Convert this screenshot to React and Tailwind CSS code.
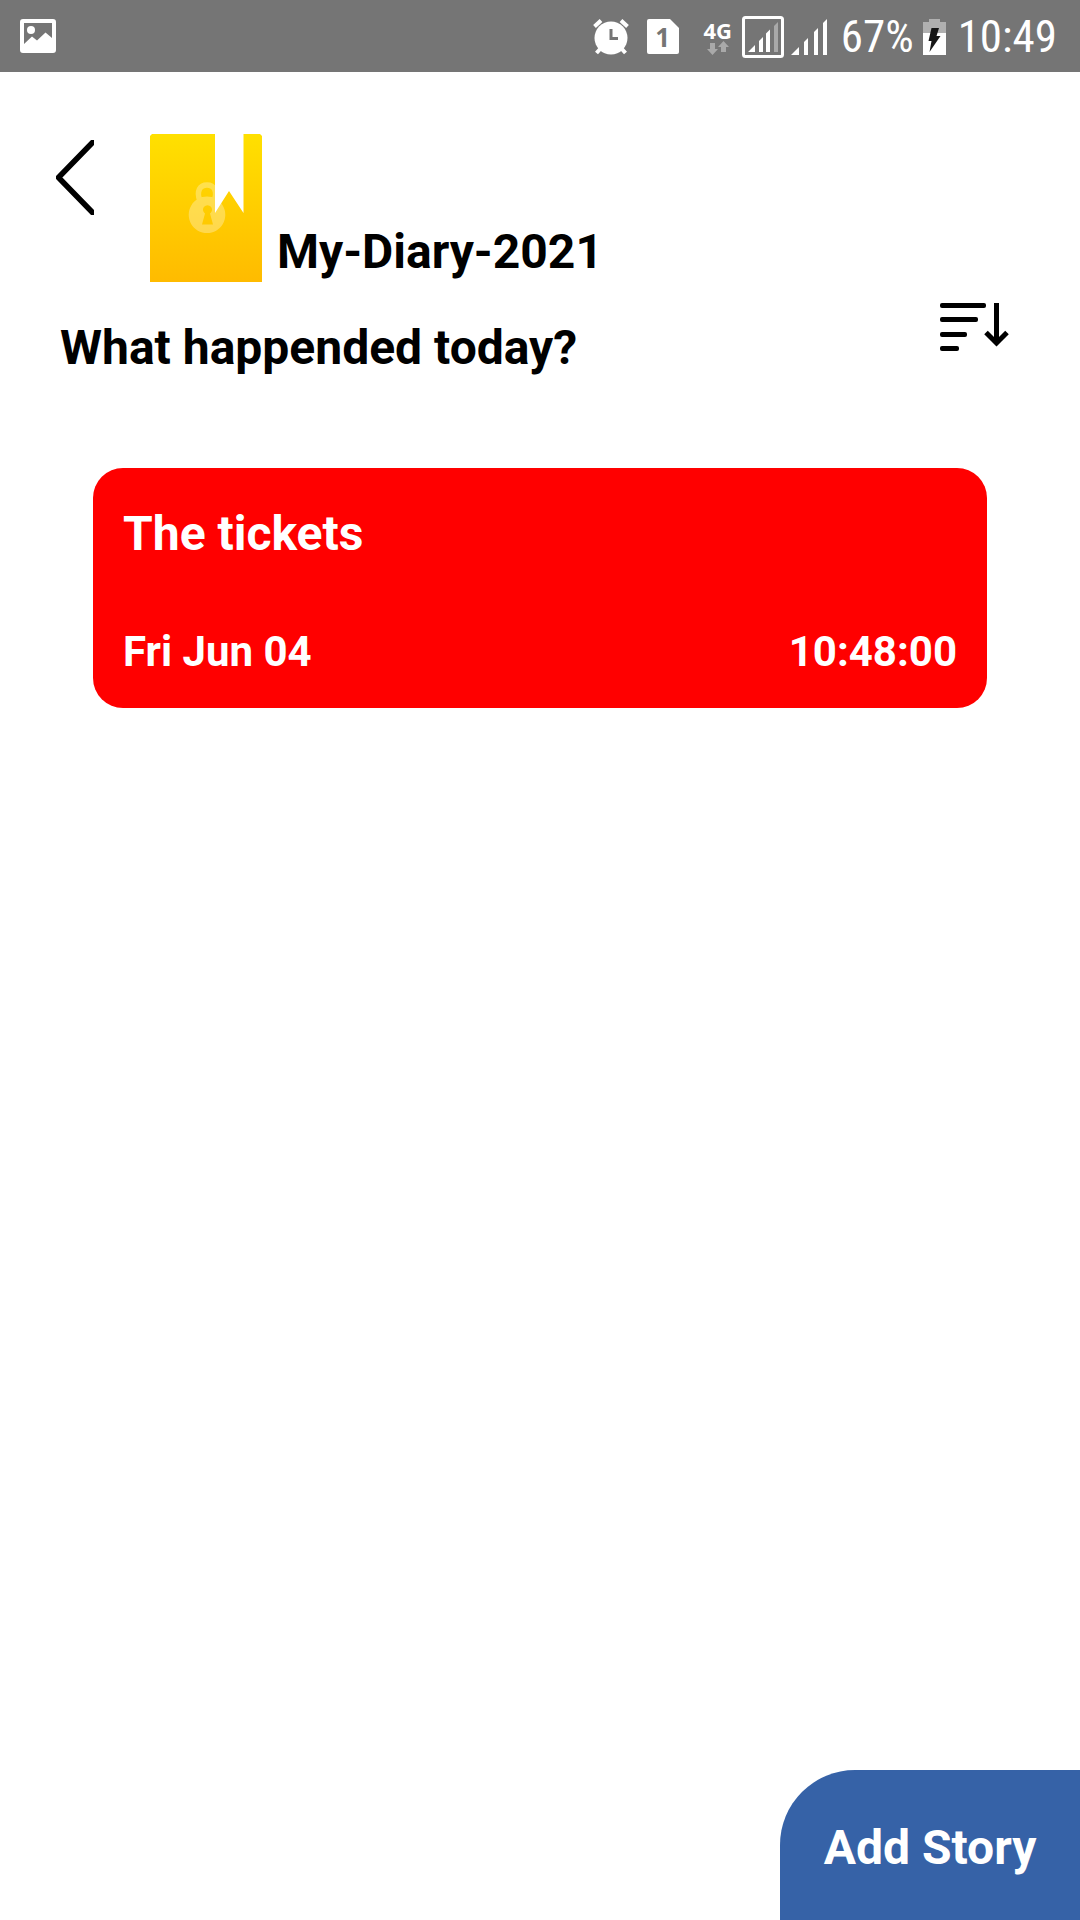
import React from "react";

function PictureIcon() {
  return (
    <svg width="36" height="34" viewBox="0 0 36 34" aria-hidden="true">
      <path
        fill="#fff"
        fillRule="evenodd"
        d="M3 0H33a3 3 0 0 1 3 3V31a3 3 0 0 1-3 3H3a3 3 0 0 1-3-3V3a3 3 0 0 1 3-3ZM4 4V25L12 17.500 17 21.500 25.500 13.500 32 19V4Z"
      />
      <circle cx="11" cy="11" r="4" fill="#fff" />
    </svg>
  );
}

function AlarmIcon() {
  return (
    <svg width="36" height="36" viewBox="0 0 36 36" aria-hidden="true">
      <g stroke="#fff" strokeWidth="4" fill="none">
        <path d="M1.500 7.500 8 1.500M34.500 7.500 28 1.500" />
        <path d="M8 29 3.500 34M28 29 32.500 34" />
      </g>
      <circle cx="18" cy="19" r="16.500" fill="#fff" />
      <path d="M18 10V19.500H25" fill="none" stroke="#757575" strokeWidth="3" />
    </svg>
  );
}

function SimIcon() {
  return (
    <span className="relative flex h-[35px] w-8 items-center justify-center">
      <svg className="absolute inset-0" width="32" height="35" viewBox="0 0 32 35" aria-hidden="true">
        <path fill="#fff" d="M2 0H23L32 9V33a2 2 0 0 1-2 2H2a2 2 0 0 1-2-2V2a2 2 0 0 1 2-2Z" />
      </svg>
      <span className="relative font-['Noto_Sans',sans-serif] text-[26px] leading-[36px] font-bold text-[#757575]">1</span>
    </span>
  );
}

function NetworkType() {
  return (
    <span className="flex w-[30px] flex-col items-center">
      <span className="font-['Noto_Sans',sans-serif] text-[22px] leading-[22px] font-bold">4G</span>
      <svg width="22" height="14" viewBox="0 0 22 14" aria-hidden="true">
        <path fill="#a9a9a9" d="M3 2H8V8H11L5.500 14 0 8H3ZM14 11V6H11L16.500 0 22 6H19V11Z" />
      </svg>
    </span>
  );
}

function BoxedSignal() {
  return (
    <svg width="42" height="42" viewBox="0 0 42 42" aria-hidden="true">
      <rect x="1.500" y="1.500" width="39" height="39" rx="2" fill="none" stroke="#fff" strokeWidth="3" />
      <path fill="#fff" d="M6 36 13 29V36ZM17 25 21 21V36H17ZM24 17.500 28 13.500V36H24Z" />
      <path fill="#a9a9a9" d="M32 10 36 6V36H32Z" />
    </svg>
  );
}

function Signal() {
  return (
    <svg width="36" height="36" viewBox="0 0 36 36" aria-hidden="true">
      <path fill="#fff" d="M0 36 8 28V36ZM13 23 17 19V36H13ZM23 13 27 9V36H23ZM32 4 36 0V36H32Z" />
    </svg>
  );
}

function BatteryIcon() {
  return (
    <svg width="23" height="36" viewBox="0 0 23 36" aria-hidden="true">
      <path fill="#b0b0b0" d="M6 0H17V3H23V36H0V3H6Z" />
      <path fill="#fff" d="M0 14H23V36H0Z" />
      <path fill="#161616" d="M8.500 9H16L13.500 17H17.500L6.500 33 8.500 22H5.500Z" />
    </svg>
  );
}

function StatusBar() {
  return (
    <div className="flex h-[72px] items-center bg-[#757575] pr-[23px] pl-5 text-white">
      <PictureIcon />
      <div className="ml-auto flex items-center pt-px font-['Roboto_Condensed','Liberation_Sans_Narrow','Roboto',sans-serif] text-[45px] leading-[55px]">
        <AlarmIcon />
        <span className="ml-[18px]"><SimIcon /></span>
        <span className="ml-6"><NetworkType /></span>
        <span className="ml-[9px]"><BoxedSignal /></span>
        <span className="ml-[7px]"><Signal /></span>
        <span className="ml-[14px]">67%</span>
        <span className="ml-[9px]"><BatteryIcon /></span>
        <span className="ml-3">10:49</span>
      </div>
    </div>
  );
}

function DiaryCover() {
  return (
    <svg className="shrink-0" width="112" height="148" viewBox="0 0 112 148" role="img" aria-label="Diary">
      <defs>
        <linearGradient id="cover" x1="0" y1="0" x2="0" y2="1">
          <stop offset="0" stopColor="#ffe000" />
          <stop offset="1" stopColor="#ffbb00" />
        </linearGradient>
      </defs>
      <path fill="url(#cover)" d="M2 0H110L112 2V148H0V2Z" />
      <g opacity="0.3">
        <path d="M50 67C46 57 50 51 57 51S68 57 64 67" fill="none" stroke="#fff" strokeWidth="5.500" />
        <path
          fill="#fff"
          fillRule="evenodd"
          d="M57 62.500a18.300 18.300 0 1 0 0.010 0ZM55 79.500 52 90.500H63L60 79.500A4.500 4.500 0 1 0 55 79.500Z"
        />
      </g>
      <path fill="#fff" d="M65 0H93.500V79L79 57 65 79Z" />
    </svg>
  );
}

function SortIcon() {
  return (
    <svg width="70" height="48" viewBox="0 0 70 48" aria-hidden="true">
      <g fill="#000">
        <rect x="0" y="0" width="46" height="5" rx="2" />
        <rect x="0" y="14" width="38" height="5" rx="2" />
        <rect x="0" y="29" width="27" height="5" rx="2" />
        <rect x="0" y="43" width="19" height="5" rx="2" />
      </g>
      <path d="M56.500 0V40M46 29.500 56.500 40 67 29.500" fill="none" stroke="#000" strokeWidth="5" />
    </svg>
  );
}

const stories = [{ title: "The tickets", date: "Fri Jun 04", time: "10:48:00" }];

export default function App() {
  return (
    <div className="flex min-h-screen flex-col bg-white font-['Roboto',sans-serif] text-black">
      <StatusBar />
      <header className="flex items-start pt-[62px] pl-14">
        <button type="button" aria-label="Back" className="mt-[6px]">
          <svg className="block" width="38" height="75" viewBox="0 0 38 75" aria-hidden="true">
            <path
              d="M36.500 2.500 2.500 37.500 36.500 72.500"
              fill="none"
              stroke="#000"
              strokeWidth="5.500"
              strokeLinejoin="round"
              strokeLinecap="round"
            />
          </svg>
        </button>
        <div className="ml-14 flex items-end">
          <DiaryCover />
          <h1 className="mb-0.5 ml-[15px] text-[48px] leading-[56px] font-bold">My-Diary-2021</h1>
        </div>
      </header>
      <div className="flex items-start justify-between pt-[21px] pr-[70px] pl-[60px]">
        <h2 className="pt-[17px] text-[48px] leading-[56px] font-bold">What happended today?</h2>
        <button type="button" aria-label="Sort stories">
          <SortIcon />
        </button>
      </div>
      <main className="mt-[92px] flex flex-col gap-8 px-[93px] text-white">
        {stories.map((story) => (
          <article key={story.title} className="rounded-[30px] bg-[#ff0000] px-[30px] pt-[38px] pb-8 font-bold">
            <h3 className="text-[48px] leading-[56px]">{story.title}</h3>
            <div className="mt-[65px] flex justify-between text-[42px] leading-[49px]">
              <span>{story.date}</span>
              <time>{story.time}</time>
            </div>
          </article>
        ))}
      </main>
      <button
        type="button"
        className="mt-auto ml-auto h-[150px] w-[300px] rounded-tl-[75px] bg-[#3662a7] pt-1.5 text-[48px] leading-[56px] font-bold text-white"
      >
        Add Story
      </button>
    </div>
  );
}
